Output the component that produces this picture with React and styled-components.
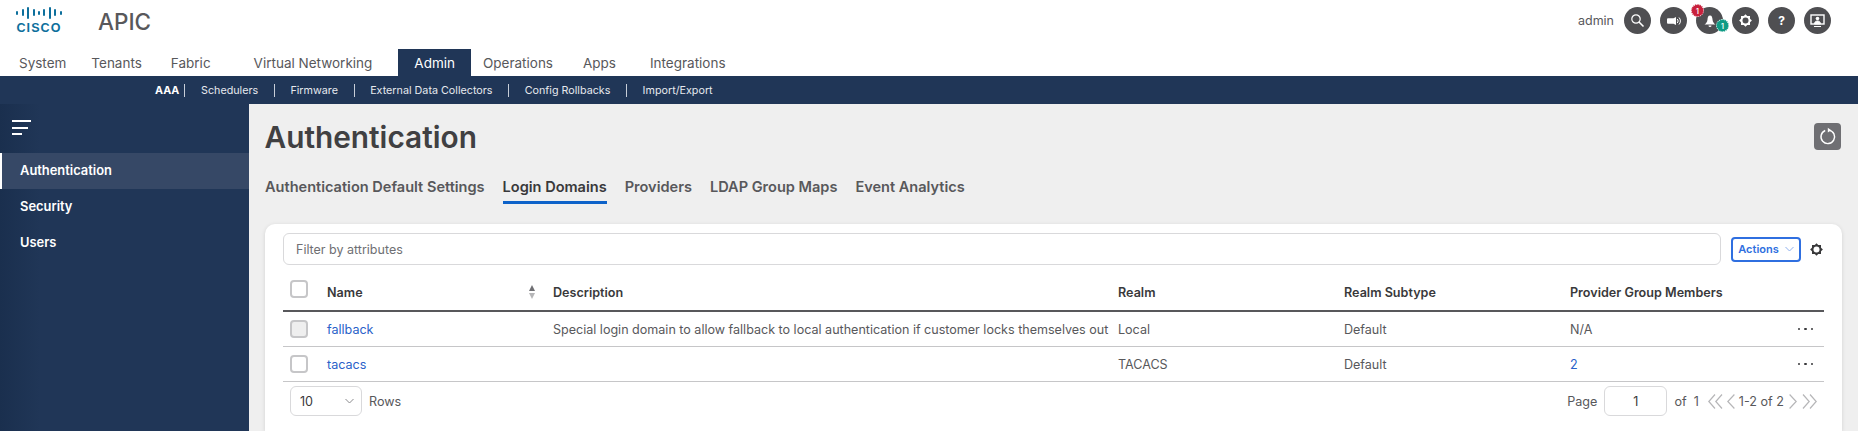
import React from "react";
import styled, { createGlobalStyle } from "styled-components";

const navItems = [
  { label: "System", gap: 19 },
  { label: "Tenants", gap: 25 },
  { label: "Fabric", gap: 29 },
  { label: "Virtual Networking", gap: 43 },
  { label: "Admin", gap: 26, active: true },
  { label: "Operations", gap: 12 },
  { label: "Apps", gap: 30 },
  { label: "Integrations", gap: 34 },
];

const subItems = ["Schedulers", "Firmware", "External Data Collectors", "Config Rollbacks", "Import/Export"];
const tabs = ["Authentication Default Settings", "Login Domains", "Providers", "LDAP Group Maps", "Event Analytics"];
const logoBars = [4, 7, 12, 7, 4, 7, 12, 7, 4];

const GlobalStyle = createGlobalStyle`
  html, body {
    margin: 0;
    height: 100%;
    overflow: hidden;
    background: #fff;
    font-family: Inter, "Liberation Sans", sans-serif;
    color: #58585b;
  }
`;

const Page = styled.div`
  width: 1858px;
  height: 431px;
  display: flex;
  flex-direction: column;
  overflow: hidden;
`;

const TopBar = styled.header`
  height: 49px;
  display: flex;
  align-items: flex-start;
  flex-shrink: 0;
`;

const Logo = styled.div`
  width: 46px;
  margin: 6px 0 0 16px;
  display: flex;
  flex-direction: column;
  align-items: center;
  color: #0d6f9c;
`;

const LogoBars = styled.div`
  height: 13px;
  display: flex;
  align-items: center;
  gap: 3.4px;
`;

const LogoBar = styled.span`
  width: 2px;
  border-radius: 1px;
  background: #0d6f9c;
  height: ${(p) => p.$h}px;
`;

const LogoText = styled.span`
  font-family: "Liberation Sans", sans-serif;
  font-size: 12.5px;
  line-height: 13px;
  font-weight: 700;
  letter-spacing: 1.1px;
  margin-top: 3px;
`;

const AppName = styled.div`
  margin: 8px 0 0 36px;
  font-size: 22.5px;
  line-height: 28px;
  font-weight: 500;
  color: #58585b;
`;

const UserArea = styled.div`
  margin: 7px 27px 0 auto;
  display: flex;
  align-items: center;
  gap: 9px;
`;

const UserName = styled.span`
  font-size: 12.5px;
  margin-right: 1px;
  color: #58585b;
`;

const RoundButton = styled.div`
  position: relative;
  width: 27px;
  height: 27px;
  border-radius: 50%;
  background: #4f4f52;
  display: flex;
  align-items: center;
  justify-content: center;
  color: #fff;
  font-size: 12px;
  font-weight: 700;
`;

const Badge = styled.span`
  position: absolute;
  box-sizing: border-box;
  width: 13px;
  height: 13px;
  border-radius: 50%;
  border: 1px dotted #fff;
  display: flex;
  align-items: center;
  justify-content: center;
  font-size: 8px;
  font-weight: 500;
  color: #fff;
  background: ${(p) => (p.$red ? "#c8203c" : "#0f9b85")};
  ${(p) => (p.$red ? "top: -3px; left: -5px;" : "top: 12px; left: 20px;")}
`;

const NavBar = styled.nav`
  height: 27px;
  display: flex;
  flex-shrink: 0;
`;

const NavTab = styled.div`
  margin-left: ${(p) => p.$gap}px;
  display: flex;
  align-items: center;
  font-size: 13.5px;
  padding: ${(p) => (p.$active ? "0 16px" : "0")};
  background: ${(p) => (p.$active ? "#203657" : "transparent")};
  color: ${(p) => (p.$active ? "#fff" : "#58585b")};
`;

const SubNav = styled.div`
  height: 28px;
  flex-shrink: 0;
  padding-left: 155px;
  background: #203657;
  display: flex;
  align-items: center;
  font-size: 10.75px;
  color: #e6e9ee;
`;

const SubActive = styled.b`
  color: #fff;
  font-weight: 700;
  padding-right: 5px;
`;

const SubLink = styled.span`
  border-left: 1px solid #c7ced8;
  line-height: 13px;
  padding: 0 15.6px;
`;

const Body = styled.div`
  flex: 1;
  display: flex;
  min-height: 0;
`;

const Sidebar = styled.aside`
  width: 249px;
  flex-shrink: 0;
  background: linear-gradient(90deg, #1a2f4e 0, #203657 40px);
`;

const Burger = styled.div`
  height: 48.5px;
  padding: 16px 0 0 12px;
  box-sizing: border-box;
  display: flex;
  flex-direction: column;
  gap: 4.5px;
`;

const BurgerLine = styled.span`
  display: block;
  height: 2px;
  width: ${(p) => p.$w}px;
  background: #fff;
`;

const SideItem = styled.div`
  height: 36px;
  display: flex;
  align-items: center;
  padding-left: 18px;
  font-size: 12.9px;
  font-weight: 600;
  color: #fff;
  border-left: 2px solid ${(p) => (p.$active ? "#fff" : "transparent")};
  background: ${(p) => (p.$active ? "#364866" : "transparent")};
`;

const Main = styled.main`
  flex: 1;
  min-width: 0;
  background: #efefef;
  padding: 0 16px;
  display: flex;
  flex-direction: column;
`;

const TitleRow = styled.div`
  height: 64px;
  display: flex;
  align-items: center;
  justify-content: space-between;
`;

const Title = styled.h1`
  margin: 2px 0 0 -0.5px;
  font-size: 29.8px;
  font-weight: 600;
  color: #404042;
`;

const RefreshButton = styled.div`
  width: 27px;
  height: 27px;
  margin-right: 1px;
  border-radius: 4px;
  background: #6f6f73;
  display: flex;
  align-items: center;
  justify-content: center;
`;

const Tabs = styled.div`
  height: 36px;
  display: flex;
  gap: 18px;
`;

const Tab = styled.div`
  height: 29px;
  padding-top: 4px;
  display: flex;
  align-items: center;
  font-size: 14.55px;
  font-weight: 600;
  color: ${(p) => (p.$active ? "#39393b" : "#58585b")};
  border-bottom: 3px solid ${(p) => (p.$active ? "#0d62c9" : "transparent")};
`;

const Card = styled.section`
  margin-top: 20px;
  flex: 1;
  background: #fff;
  border-radius: 10px 10px 0 0;
  padding: 9px 18px 0 18px;
  box-shadow: 0 1px 4px rgba(0, 0, 0, 0.12);
`;

const FilterRow = styled.div`
  display: flex;
  align-items: center;
`;

const FilterBox = styled.div`
  flex: 1;
  height: 30px;
  border: 1px solid #d9d9db;
  border-radius: 6px;
  padding-left: 12px;
  display: flex;
  align-items: center;
  font-size: 12.5px;
  color: #6f6f73;
`;

const ActionsButton = styled.div`
  width: 66px;
  height: 21px;
  margin-left: 10px;
  border: 2px solid #2f6fe0;
  border-radius: 4px;
  display: flex;
  align-items: center;
  justify-content: center;
  gap: 6px;
  font-size: 11px;
  font-weight: 600;
  color: #2f6fe0;
`;

const GearSlot = styled.div`
  width: 23px;
  display: flex;
  justify-content: flex-end;
`;

const Row = styled.div`
  display: grid;
  grid-template-columns: 44px 226px 565px 226px 226px 1fr;
  align-items: center;
  height: ${(p) => (p.$head ? "43px" : "34px")};
  padding-top: ${(p) => (p.$head ? "2px" : "0")};
  border-bottom: ${(p) => (p.$head ? "2px solid #58585b" : "1px solid #c6c6c8")};
  font-size: ${(p) => (p.$head ? "12.6px" : "12.55px")};
  font-weight: ${(p) => (p.$head ? 600 : 400)};
  color: ${(p) => (p.$head ? "#39393b" : "#58585b")};
  white-space: nowrap;
`;

const HeadCell = styled.div`
  margin-top: 7px;
`;

const Check = styled.span`
  display: block;
  box-sizing: border-box;
  width: 18px;
  height: 18px;
  margin-left: 7px;
  border: 2px solid #c6c6c8;
  border-radius: 4px;
  background: ${(p) => (p.$off ? "#efefef" : "#fff")};
`;

const NameCell = styled.div`
  display: flex;
  align-items: center;
  justify-content: space-between;
  padding-right: 18px;
  margin-top: 7px;
`;

const SortIcon = styled.span`
  display: flex;
  flex-direction: column;
  gap: 2px;
`;

const Arrow = styled.span`
  width: 0;
  height: 0;
  border-left: 3.5px solid transparent;
  border-right: 3.5px solid transparent;
  ${(p) => (p.$down ? "border-top: 6px solid #b6b6b8;" : "border-bottom: 6px solid #6f6f73;")}
`;

const LinkText = styled.span`
  color: #2a62c9;
`;

const LastCell = styled.div`
  display: flex;
  align-items: center;
  justify-content: space-between;
  padding-right: 11px;
`;

const Dots = styled.span`
  display: flex;
  gap: 4px;
`;

const Dot = styled.i`
  width: 2.5px;
  height: 2.5px;
  border-radius: 50%;
  background: #39393b;
`;

const Footer = styled.div`
  height: 38px;
  display: flex;
  align-items: center;
  padding: 0 7px;
  font-size: 12.6px;
  color: #58585b;
`;

const RowsSelect = styled.div`
  width: 70px;
  height: 28px;
  border: 1px solid #d9d9db;
  border-radius: 6px;
  display: flex;
  align-items: center;
  justify-content: space-between;
  color: #39393b;
  margin-right: 7px;
`;

const SelectValue = styled.span`
  margin-left: 9px;
`;

const SelectCaret = styled.span`
  margin-right: 7px;
  display: flex;
`;

const Pager = styled.div`
  margin-left: auto;
  display: flex;
  align-items: center;
`;

const PageInput = styled.div`
  width: 61px;
  height: 28px;
  margin: 0 7px;
  border: 1px solid #d9d9db;
  border-radius: 6px;
  display: flex;
  align-items: center;
  justify-content: center;
  color: #39393b;
`;

const OfText = styled.span`
  margin-right: 9px;
`;

const PagerIcon = styled.svg`
  display: block;
  margin: 0 ${(p) => p.$mx || 0}px;
`;

const GearIcon = ({ color, size, hole }) => (
  <svg width={size} height={size} viewBox="0 0 16 16">
    <rect x="3.2" y="3.2" width="9.6" height="9.6" fill={color} />
    <rect x="3.2" y="3.2" width="9.6" height="9.6" fill={color} transform="rotate(45 8 8)" />
    <circle cx="8" cy="8" r="3.2" fill={hole} />
  </svg>
);

const TopIcons = () => (
  <>
    <RoundButton>
      <svg width="15" height="15" viewBox="0 0 15 15" fill="none" stroke="#fff" strokeWidth="1.2">
        <circle cx="6" cy="6" r="4.2" />
        <path d="M9 9l4.5 4.5" strokeWidth="1.6" />
      </svg>
    </RoundButton>
    <RoundButton>
      <svg width="14" height="10" viewBox="0 0 14 10" fill="none">
        <path d="M0 3.2q0-1 1-1h5.5L9 1v8L6.500 7.800H1q-1 0-1-1z" fill="#fff" />
        <path d="M10.300 3a3 3 0 0 1 0 4M12 1.500a5 5 0 0 1 0 7" stroke="#fff" strokeWidth="1" />
      </svg>
    </RoundButton>
    <RoundButton>
      <svg width="14" height="14" viewBox="0 0 14 14" fill="#fff">
        <path d="M7 1.500C5 1.500 4.700 3.200 4.500 5.500 4.300 8 3 9.500 1.500 10.500h11C11 9.500 9.700 8 9.500 5.500 9.300 3.200 9 1.500 7 1.500z" />
        <path d="M5.500 11.500h3a1.500 1.500 0 0 1-3 0z" />
      </svg>
      <Badge $red>1</Badge>
      <Badge>1</Badge>
    </RoundButton>
    <RoundButton>
      <GearIcon color="#fff" size={15} hole="#4f4f52" />
    </RoundButton>
    <RoundButton>?</RoundButton>
    <RoundButton>
      <svg width="15" height="14" viewBox="0 0 15 14" fill="none">
        <rect x="1" y="1" width="13" height="9" stroke="#fff" strokeWidth="1.4" />
        <circle cx="7.500" cy="4.500" r="1.800" fill="#fff" />
        <path d="M4.500 10c0-2 1.300-3 3-3s3 1 3 3zM4 12.500h7" fill="#fff" stroke="#fff" />
      </svg>
    </RoundButton>
  </>
);

const DoubleChevron = ({ left, mx }) => (
  <PagerIcon $mx={mx} width="15" height="15" viewBox="0 0 15 15" fill="none" stroke="#b6b6b8" strokeWidth="1.2">
    <path d={left ? "M7 .5L.8 7.500 7 14.500M14 .5L7.800 7.500 14 14.500" : "M1 .5l6.200 7L1 14.500M8 .5l6.200 7L8 14.500"} />
  </PagerIcon>
);

const SingleChevron = ({ left, mx }) => (
  <PagerIcon $mx={mx} width="8" height="15" viewBox="0 0 8 15" fill="none" stroke="#b6b6b8" strokeWidth="1.2">
    <path d={left ? "M7.400 .5L.8 7.500l6.600 7" : "M.6 .5l6.600 7-6.600 7"} />
  </PagerIcon>
);

const Caret = ({ color }) => (
  <svg width="9" height="6" viewBox="0 0 9 6" fill="none" stroke={color} strokeWidth="1">
    <path d="M.5 1l4 4 4-4" />
  </svg>
);

const RowDots = () => (
  <Dots>
    <Dot />
    <Dot />
    <Dot />
  </Dots>
);

export default function App() {
  return (
    <Page>
      <GlobalStyle />
      <TopBar>
        <Logo>
          <LogoBars>
            {logoBars.map((h, i) => (
              <LogoBar key={i} $h={h} />
            ))}
          </LogoBars>
          <LogoText>CISCO</LogoText>
        </Logo>
        <AppName>APIC</AppName>
        <UserArea>
          <UserName>admin</UserName>
          <TopIcons />
        </UserArea>
      </TopBar>
      <NavBar>
        {navItems.map((item) => (
          <NavTab key={item.label} $gap={item.gap} $active={item.active}>
            {item.label}
          </NavTab>
        ))}
      </NavBar>
      <SubNav>
        <SubActive>AAA</SubActive>
        {subItems.map((item) => (
          <SubLink key={item}>{item}</SubLink>
        ))}
      </SubNav>
      <Body>
        <Sidebar>
          <Burger>
            <BurgerLine $w={19} />
            <BurgerLine $w={16} />
            <BurgerLine $w={10} />
          </Burger>
          <SideItem $active>Authentication</SideItem>
          <SideItem>Security</SideItem>
          <SideItem>Users</SideItem>
        </Sidebar>
        <Main>
          <TitleRow>
            <Title>Authentication</Title>
            <RefreshButton>
              <svg width="18" height="18" viewBox="0 0 18 18" fill="none" stroke="#fff" strokeWidth="1.4">
                <path d="M10 3.100a6.800 6.800 0 1 1-3.800.4" />
                <path d="M8.800 .8l3.400 2.400-3.400 2.400z" fill="#fff" stroke="none" />
              </svg>
            </RefreshButton>
          </TitleRow>
          <Tabs>
            {tabs.map((t) => (
              <Tab key={t} $active={t === "Login Domains"}>
                {t}
              </Tab>
            ))}
          </Tabs>
          <Card>
            <FilterRow>
              <FilterBox>Filter by attributes</FilterBox>
              <ActionsButton>
                Actions <Caret color="#8fb0ee" />
              </ActionsButton>
              <GearSlot>
                <GearIcon color="#39393b" size={15} hole="#fff" />
              </GearSlot>
            </FilterRow>
            <Row $head>
              <Check />
              <NameCell>
                Name
                <SortIcon>
                  <Arrow />
                  <Arrow $down />
                </SortIcon>
              </NameCell>
              <HeadCell>Description</HeadCell>
              <HeadCell>Realm</HeadCell>
              <HeadCell>Realm Subtype</HeadCell>
              <HeadCell>Provider Group Members</HeadCell>
            </Row>
            <Row>
              <Check $off />
              <LinkText>fallback</LinkText>
              <div>Special login domain to allow fallback to local authentication if customer locks themselves out</div>
              <div>Local</div>
              <div>Default</div>
              <LastCell>
                N/A
                <RowDots />
              </LastCell>
            </Row>
            <Row>
              <Check />
              <LinkText>tacacs</LinkText>
              <div />
              <div>TACACS</div>
              <div>Default</div>
              <LastCell>
                <LinkText>2</LinkText>
                <RowDots />
              </LastCell>
            </Row>
            <Footer>
              <RowsSelect>
                <SelectValue>10</SelectValue>
                <SelectCaret>
                  <Caret color="#8a8a8d" />
                </SelectCaret>
              </RowsSelect>
              Rows
              <Pager>
                Page
                <PageInput>1</PageInput>
                <OfText>of&nbsp;&nbsp;1</OfText>
                <DoubleChevron left />
                <SingleChevron left mx={4} />
                <span>1-2 of 2</span>
                <SingleChevron mx={5} />
                <DoubleChevron />
              </Pager>
            </Footer>
          </Card>
        </Main>
      </Body>
    </Page>
  );
}
